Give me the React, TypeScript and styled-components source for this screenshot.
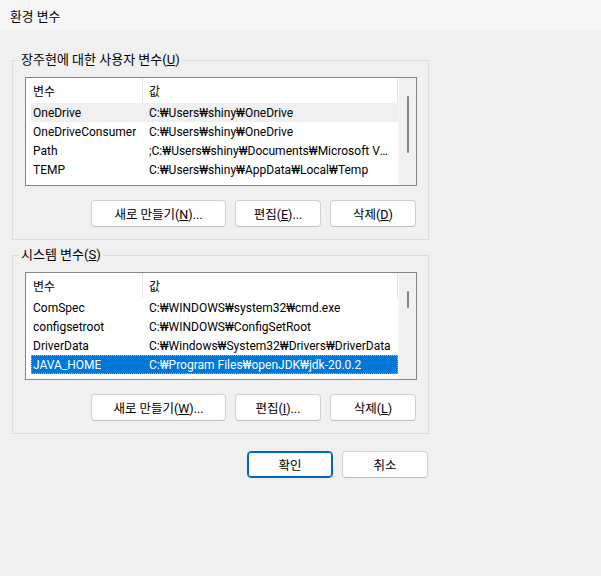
import styled, { createGlobalStyle } from 'styled-components';

const GlobalStyle = createGlobalStyle`
  html, body {
    margin: 0;
    background: #f0f0f0;
  }
  body {
    font-family: Roboto, "Noto Sans CJK KR", sans-serif;
    font-size: 12px;
    color: #000;
  }
`;

const Window = styled.div`
  width: 601px;
  height: 576px;
  background: #f0f0f0;
`;

const TitleBar = styled.div`
  height: 30px;
  display: flex;
  align-items: center;
  padding-left: 10px;
  background: #f6f6f6;
  font-size: 12.8px;
`;

const Body = styled.div`
  width: 417px;
  padding: 22px 0 0 12px;
  display: flex;
  flex-direction: column;
`;

const Group = styled.fieldset<{ $gap?: number }>`
  margin: ${p => p.$gap ?? 0}px 0 0;
  padding: 0 11px 12px 12px;
  border: 1px solid #dcdcdc;
  min-width: 0;
`;

const Legend = styled.legend`
  margin-left: -6px;
  padding: 0 2px;
  line-height: 16px;
  font-size: 13px;
`;

const ListBox = styled.div<{ $h: number }>`
  margin-top: 9px;
  height: ${p => p.$h}px;
  box-sizing: border-box;
  border: 1px solid #858585;
  background: #fff;
  display: flex;
  overflow: hidden;
`;

const ListBody = styled.div`
  flex: 1;
  min-width: 0;
  overflow: hidden;
`;

const Row = styled.div<{ $state?: 'soft' | 'selected' }>`
  display: grid;
  grid-template-columns: 112px 1fr;
  height: 19px;
  align-items: center;
  margin-left: 5px;
  white-space: nowrap;
  background: ${p =>
    p.$state === 'selected' ? '#0078d7' : p.$state === 'soft' ? '#f0f0f0' : 'transparent'};
  color: ${p => (p.$state === 'selected' ? '#fff' : '#000')};
  outline: ${p => (p.$state === 'selected' ? '1px dotted #f3a33c' : 'none')};
  outline-offset: -1px;
`;

const HeaderRow = styled(Row)`
  height: 25px;
`;

const Cell = styled.div<{ $first?: boolean; $head?: boolean }>`
  padding-left: ${p => (p.$first ? 2 : 6)}px;
  padding-right: 6px;
  overflow: hidden;
  align-self: stretch;
  display: flex;
  align-items: center;
  border-right: ${p => (p.$head ? '1px solid #e5e5e5' : 'none')};
`;

const CellText = styled.span`
  overflow: hidden;
  text-overflow: ellipsis;
`;

const Scrollbar = styled.div`
  width: 17px;
  flex: none;
  background: #f0f0f0;
  border-left: 1px solid #fafafa;
  display: flex;
  flex-direction: column;
`;

const Thumb = styled.div<{ $top: number; $len: number }>`
  margin: ${p => p.$top}px 0 0 8px;
  width: 2px;
  height: ${p => p.$len}px;
  border-radius: 1px;
  background: #858585;
`;

const ButtonRow = styled.div`
  margin-top: 14px;
  display: flex;
  justify-content: flex-end;
  gap: 9px;
  padding-right: 1px;
`;

const Footer = styled.div`
  margin-top: 17px;
  display: flex;
  justify-content: flex-end;
  gap: 9px;
  padding-right: 1px;
`;

const Button = styled.button<{ $wide?: boolean; $primary?: boolean }>`
  width: ${p => (p.$wide ? 135 : 86)}px;
  height: 27px;
  padding: 0;
  box-sizing: border-box;
  font-family: inherit;
  font-size: 12.5px;
  color: #000;
  background: #fdfdfd;
  border: 1px solid ${p => (p.$primary ? '#0067c0' : '#d0d0d0')};
  border-bottom-color: ${p => (p.$primary ? '#0067c0' : '#bcbcbc')};
  box-shadow: ${p => (p.$primary ? 'inset 0 0 0 1px #0067c0' : 'none')};
  border-radius: 4px;
`;

type Variable = { name: string; value: string; state?: 'soft' | 'selected' };

const userVars: Variable[] = [
  { name: 'OneDrive', value: 'C:₩Users₩shiny₩OneDrive', state: 'soft' },
  { name: 'OneDriveConsumer', value: 'C:₩Users₩shiny₩OneDrive' },
  { name: 'Path', value: ';C:₩Users₩shiny₩Documents₩Microsoft VS Code₩bin' },
  { name: 'TEMP', value: 'C:₩Users₩shiny₩AppData₩Local₩Temp' },
];

const systemVars: Variable[] = [
  { name: 'ComSpec', value: 'C:₩WINDOWS₩system32₩cmd.exe' },
  { name: 'configsetroot', value: 'C:₩WINDOWS₩ConfigSetRoot' },
  { name: 'DriverData', value: 'C:₩Windows₩System32₩Drivers₩DriverData' },
  { name: 'JAVA_HOME', value: 'C:₩Program Files₩openJDK₩jdk-20.0.2', state: 'selected' },
];

const VarList = ({
  vars,
  height,
  thumbTop,
  thumbLen,
}: {
  vars: Variable[];
  height: number;
  thumbTop: number;
  thumbLen: number;
}) => (
  <ListBox $h={height}>
    <ListBody>
      <HeaderRow>
        <Cell $first $head>변수</Cell>
        <Cell $head>값</Cell>
      </HeaderRow>
      {vars.map(v => (
        <Row key={v.name} $state={v.state}>
          <Cell $first>
            <CellText>{v.name}</CellText>
          </Cell>
          <Cell>
            <CellText>{v.value}</CellText>
          </Cell>
        </Row>
      ))}
    </ListBody>
    <Scrollbar>
      <Thumb $top={thumbTop} $len={thumbLen} />
    </Scrollbar>
  </ListBox>
);

export default function App() {
  return (
    <Window>
      <GlobalStyle />
      <TitleBar>환경 변수</TitleBar>
      <Body>
        <Group>
          <Legend>
            장주현에 대한 사용자 변수(<u>U</u>)
          </Legend>
          <VarList vars={userVars} height={109} thumbTop={18} thumbLen={57} />
          <ButtonRow>
            <Button $wide>
              새로 만들기(<u>N</u>)...
            </Button>
            <Button>
              편집(<u>E</u>)...
            </Button>
            <Button>
              삭제(<u>D</u>)
            </Button>
          </ButtonRow>
        </Group>
        <Group $gap={7}>
          <Legend>
            시스템 변수(<u>S</u>)
          </Legend>
          <VarList vars={systemVars} height={108} thumbTop={18} thumbLen={17} />
          <ButtonRow>
            <Button $wide>
              새로 만들기(<u>W</u>)...
            </Button>
            <Button>
              편집(<u>I</u>)...
            </Button>
            <Button>
              삭제(<u>L</u>)
            </Button>
          </ButtonRow>
        </Group>
        <Footer>
          <Button $primary>확인</Button>
          <Button>취소</Button>
        </Footer>
      </Body>
    </Window>
  );
}
